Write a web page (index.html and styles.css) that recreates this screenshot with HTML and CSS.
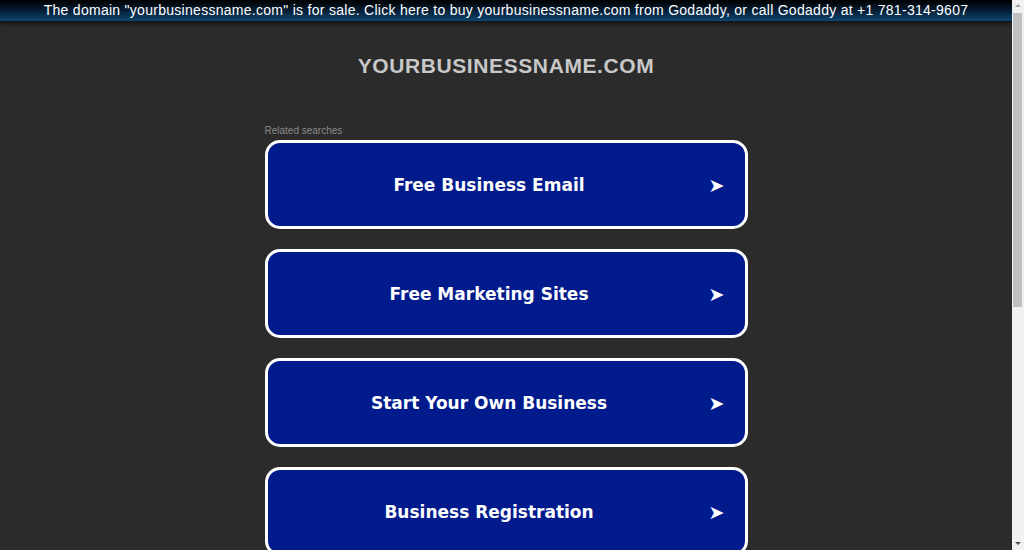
FILE: index.html
```html
<!DOCTYPE html>
<html>
<head>
<meta charset="utf-8">
<link rel="stylesheet" href="styles.css">
</head>
<body>
<div class="page">
  <div class="topbar">The domain "yourbusinessname.com" is for sale. Click here to buy yourbusinessname.com from Godaddy, or call Godaddy at +1 781-314-9607</div>
  <div class="main">
    <h1 class="domain">YOURBUSINESSNAME.COM</h1>
    <div class="related">
      <div class="label">Related searches</div>
      <a class="btn" href="#"><span class="txt">Free Business Email</span><span class="arrow">➤</span></a>
      <a class="btn" href="#"><span class="txt">Free Marketing Sites</span><span class="arrow">➤</span></a>
      <a class="btn" href="#"><span class="txt">Start Your Own Business</span><span class="arrow">➤</span></a>
      <a class="btn" href="#"><span class="txt">Business Registration</span><span class="arrow">➤</span></a>
    </div>
  </div>
</div>
<div class="scrollbar">
  <span class="sb-up"></span>
  <span class="sb-thumb"></span>
  <span class="sb-down"></span>
</div>
</body>
</html>
```
FILE: styles.css
```css
html, body {
  margin: 0;
  padding: 0;
}
body {
  background: #2b2b2b;
  font-family: "Liberation Sans", Arial, sans-serif;
}
.page {
  margin-right: 12px;
}
.topbar {
  height: 21px;
  line-height: 20px;
  text-align: center;
  color: #fff;
  font-size: 14px;
  letter-spacing: 0.28px;
  background: linear-gradient(to bottom, #000000 0%, #04172a 40%, #0d4670 100%);
  border-bottom: 1px solid #151515;
  box-shadow: 0 2px 4px rgba(0,0,0,0.5);
  white-space: nowrap;
}
.main {
  display: flex;
  flex-direction: column;
  align-items: center;
}
.domain {
  margin: 32px 0 0;
  font-size: 21px;
  font-weight: bold;
  color: #c8c8c8;
  letter-spacing: 0.6px;
  line-height: 24px;
}
.related {
  margin-top: 47px;
  width: 483px;
  display: flex;
  flex-direction: column;
  gap: 20px;
}
.label {
  font-size: 10px;
  color: #8a8a8a;
  line-height: 12px;
  margin-bottom: -17px;
}
.btn {
  box-sizing: border-box;
  height: 89px;
  padding-right: 34px;
  border: 3px solid #fff;
  border-radius: 15px;
  background: #011a8c;
  color: #fff;
  text-decoration: none;
  display: flex;
  align-items: center;
  justify-content: center;
  position: relative;
  font-family: "DejaVu Sans", Verdana, sans-serif;
  font-weight: bold;
  font-size: 17px;
}
.arrow {
  position: absolute;
  right: 20px;
  top: 50%;
  transform: translateY(-52%);
  font-size: 19px;
}
.scrollbar {
  position: fixed;
  top: 0;
  right: 0;
  width: 12px;
  height: 100%;
  background: #f1f1f1;
}
.sb-thumb {
  position: absolute;
  left: 1px;
  right: 2px;
  top: 13px;
  height: 294px;
  background: #c1c1c1;
}
.sb-up, .sb-down {
  position: absolute;
  left: 3px;
  width: 0;
  height: 0;
  border-left: 3px solid transparent;
  border-right: 3px solid transparent;
}
.sb-up {
  top: 4px;
  border-bottom: 3px solid #a3a3a3;
}
.sb-down {
  bottom: 5px;
  border-top: 3px solid #505050;
}
```
